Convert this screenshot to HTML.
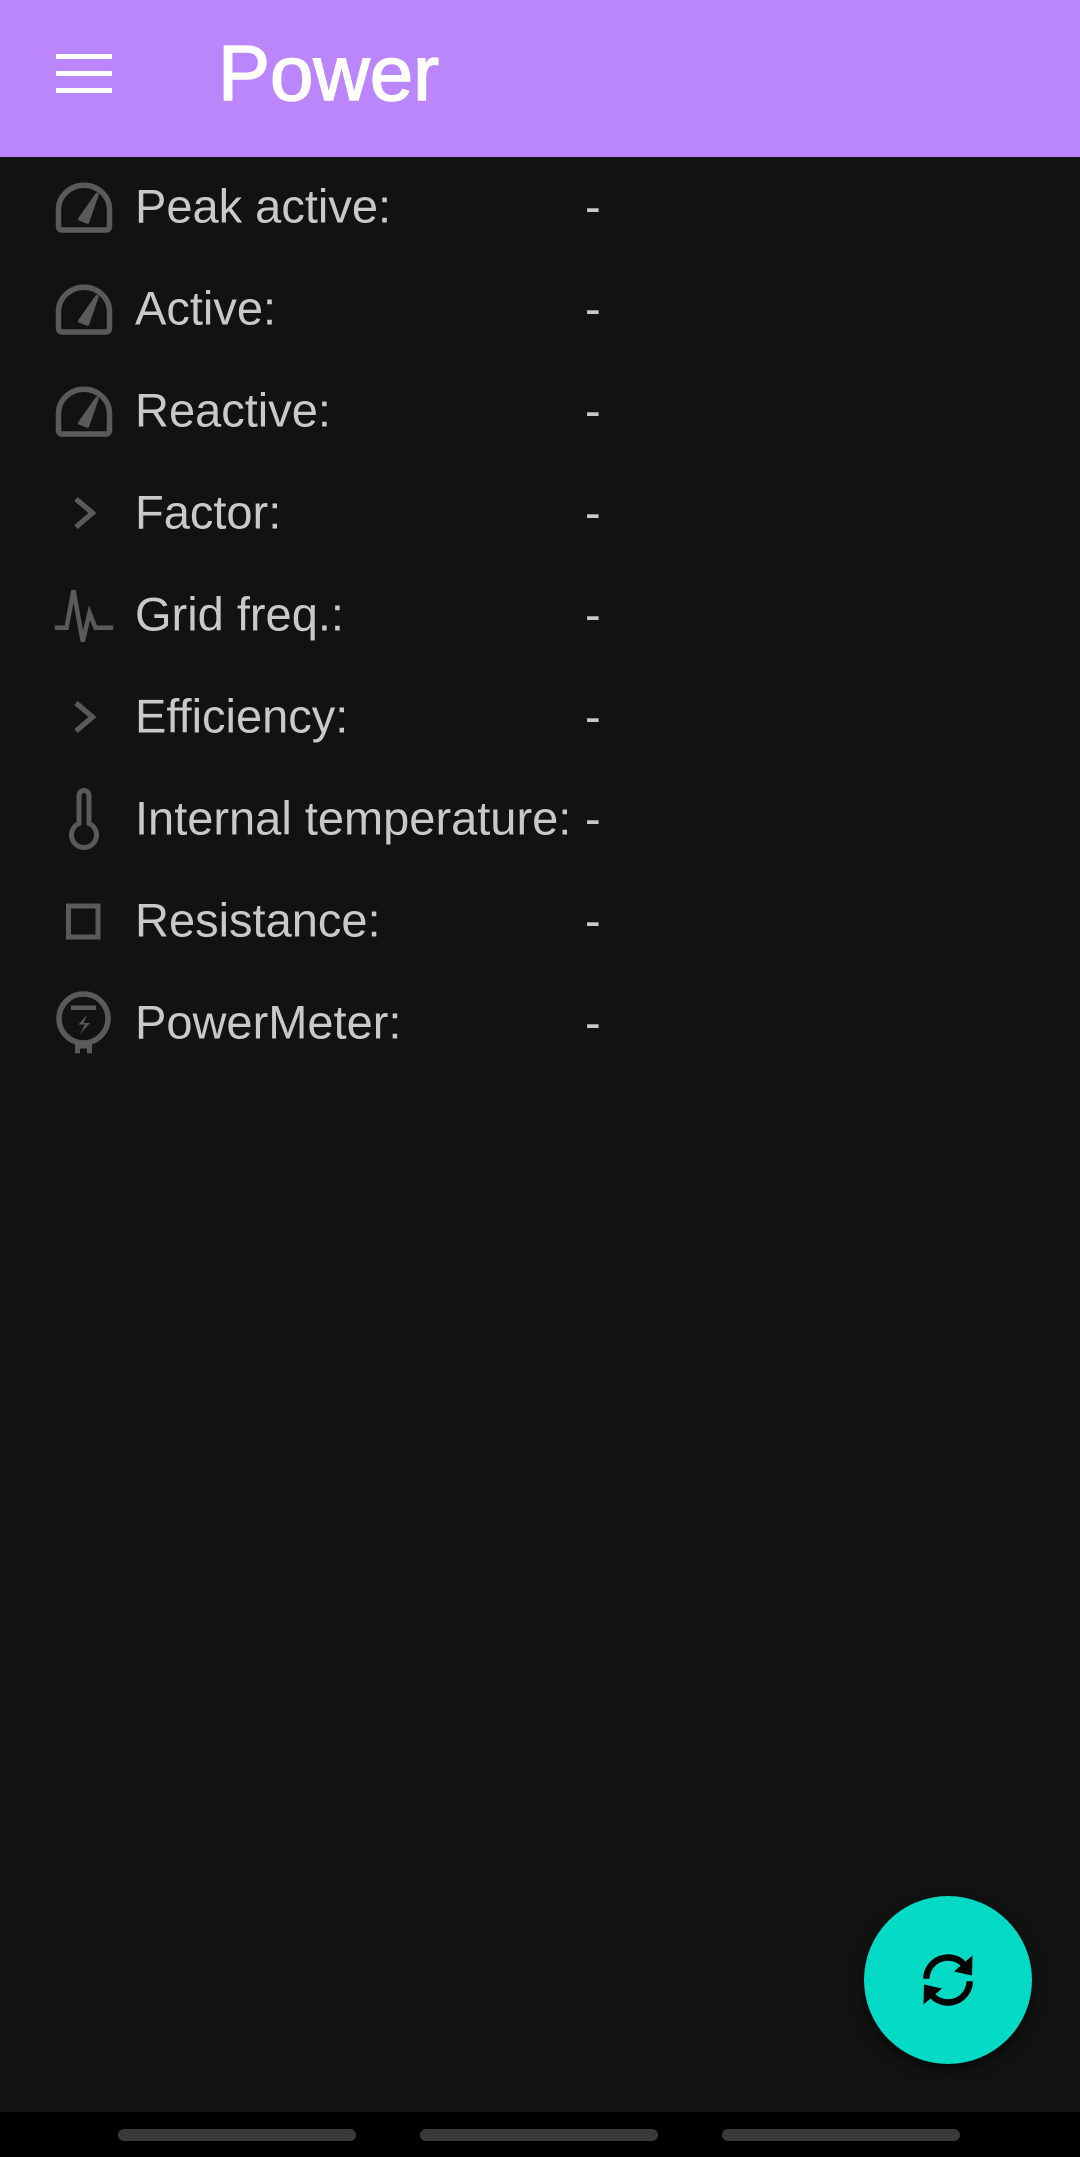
<!DOCTYPE html>
<html><head><meta charset="utf-8"><style>
*{margin:0;padding:0;box-sizing:border-box}
body{width:1080px;height:2157px;background:#121212;position:relative;overflow:hidden;font-family:"Liberation Sans",Roboto,sans-serif}
.hdr{position:absolute;left:0;top:0;width:1080px;height:157px;background:#bb86fc}
.title{position:absolute;left:218px;top:34px;font-size:78px;color:#fff;line-height:1;-webkit-text-stroke:1.5px #fff}
.bar{position:absolute;left:56px;width:56px;height:5px;background:#fff}
.row{position:absolute;left:0;width:1080px;height:102px}
.lbl{position:absolute;left:135px;top:50%;transform:translateY(-50%);font-size:47px;color:#c9c9c9;white-space:nowrap}
.val{position:absolute;left:585px;top:50%;transform:translateY(-50%);font-size:47px;color:#c9c9c9}
.row svg{position:absolute;left:54px;top:21px;width:60px;height:60px;overflow:visible}
.fab{position:absolute;left:864px;top:1896px;width:168px;height:168px;border-radius:50%;background:#03dac5;box-shadow:0 6px 12px rgba(0,0,0,.5)}
.nav{position:absolute;left:0;top:2112px;width:1080px;height:45px;background:#000}
.pill{position:absolute;top:2129px;height:12px;width:238px;border-radius:6px;background:#3a3a3a}
</style></head><body>
<div class="hdr">
<div class="bar" style="top:54px"></div><div class="bar" style="top:71px"></div><div class="bar" style="top:88px"></div>
<div class="title">Power</div>
</div>

<div class="row" style="top:155px">
<svg viewBox="0 0 24 24"><path d="M1.8 20 V13.5 A10.2 9.8 0 0 1 22.2 13.5 V20 Q22.2 21.6 20.6 21.6 H3.4 Q1.8 21.6 1.8 20 Z" fill="none" stroke="#5a5a5a" stroke-width="2.2" stroke-linejoin="round"/><path d="M10.3 17.2 L17.2 7.4 L13.4 18.4 Z" fill="#5a5a5a" stroke="#5a5a5a" stroke-width="1.4" stroke-linejoin="round"/></svg>
<div class="lbl">Peak active:</div><div class="val">-</div></div>

<div class="row" style="top:257px">
<svg viewBox="0 0 24 24"><path d="M1.8 20 V13.5 A10.2 9.8 0 0 1 22.2 13.5 V20 Q22.2 21.6 20.6 21.6 H3.4 Q1.8 21.6 1.8 20 Z" fill="none" stroke="#5a5a5a" stroke-width="2.2" stroke-linejoin="round"/><path d="M10.3 17.2 L17.2 7.4 L13.4 18.4 Z" fill="#5a5a5a" stroke="#5a5a5a" stroke-width="1.4" stroke-linejoin="round"/></svg>
<div class="lbl">Active:</div><div class="val">-</div></div>

<div class="row" style="top:359px">
<svg viewBox="0 0 24 24"><path d="M1.8 20 V13.5 A10.2 9.8 0 0 1 22.2 13.5 V20 Q22.2 21.6 20.6 21.6 H3.4 Q1.8 21.6 1.8 20 Z" fill="none" stroke="#5a5a5a" stroke-width="2.2" stroke-linejoin="round"/><path d="M10.3 17.2 L17.2 7.4 L13.4 18.4 Z" fill="#5a5a5a" stroke="#5a5a5a" stroke-width="1.4" stroke-linejoin="round"/></svg>
<div class="lbl">Reactive:</div><div class="val">-</div></div>

<div class="row" style="top:461px">
<svg viewBox="0 0 24 24"><path d="M8.8 6.8 L15.4 12.4 L8.8 18" fill="none" stroke="#5a5a5a" stroke-width="2.1"/></svg>
<div class="lbl">Factor:</div><div class="val">-</div></div>

<div class="row" style="top:563px">
<svg viewBox="0 0 24 24"><path d="M0.3 17.5 H5 L7.8 2.5 L11.5 23 L14.2 11.5 L16.6 17.5 H23.7" fill="none" stroke="#5a5a5a" stroke-width="1.8" stroke-linejoin="miter"/></svg>
<div class="lbl">Grid freq.:</div><div class="val">-</div></div>

<div class="row" style="top:665px">
<svg viewBox="0 0 24 24"><path d="M8.8 6.8 L15.4 12.4 L8.8 18" fill="none" stroke="#5a5a5a" stroke-width="2.1"/></svg>
<div class="lbl">Efficiency:</div><div class="val">-</div></div>

<div class="row" style="top:767px">
<svg viewBox="0 0 24 24"><path d="M10 14.2 V3 A2 2 0 0 1 14 3 V14.2 A5 5 0 1 1 10 14.2 Z" fill="none" stroke="#5a5a5a" stroke-width="2"/></svg>
<div class="lbl">Internal temperature:</div><div class="val">-</div></div>

<div class="row" style="top:869px">
<svg viewBox="0 0 24 24"><rect x="5.8" y="6.4" width="11.8" height="12.4" fill="none" stroke="#5a5a5a" stroke-width="2"/></svg>
<div class="lbl">Resistance:</div><div class="val">-</div></div>

<div class="row" style="top:971px">
<svg viewBox="0 0 24 24"><circle cx="11.8" cy="10.6" r="9.8" fill="none" stroke="#5a5a5a" stroke-width="2.2"/><rect x="6.8" y="5.4" width="10" height="1.8" fill="#5a5a5a"/><path d="M13.2 9.2 L9.8 13 H12.4 L10.4 16.8 L14.4 12.4 H11.8 Z" fill="#5a5a5a"/><path d="M8.4 19.8 V24.5 H10.4 V22.6 H13.2 V24.5 H15.2 V19.8 Z" fill="#5a5a5a"/></svg>
<div class="lbl">PowerMeter:</div><div class="val">-</div></div>

<div class="fab">
<svg viewBox="0 0 24 24" style="position:absolute;left:54px;top:54px;width:60px;height:60px"><path d="M3.3 11.5 A8.7 8.7 0 0 1 18.2 5.6" fill="none" stroke="#000" stroke-width="2.6"/><path d="M21.8 2.2 L21.6 10.2 L14.4 8.6 Z" fill="#000"/><path d="M20.7 12.5 A8.7 8.7 0 0 1 5.8 18.4" fill="none" stroke="#000" stroke-width="2.6"/><path d="M2.2 21.8 L2.4 13.8 L9.6 15.4 Z" fill="#000"/></svg>
</div>

<div class="nav"></div>
<div class="pill" style="left:118px"></div>
<div class="pill" style="left:420px"></div>
<div class="pill" style="left:722px"></div>
</body></html>
